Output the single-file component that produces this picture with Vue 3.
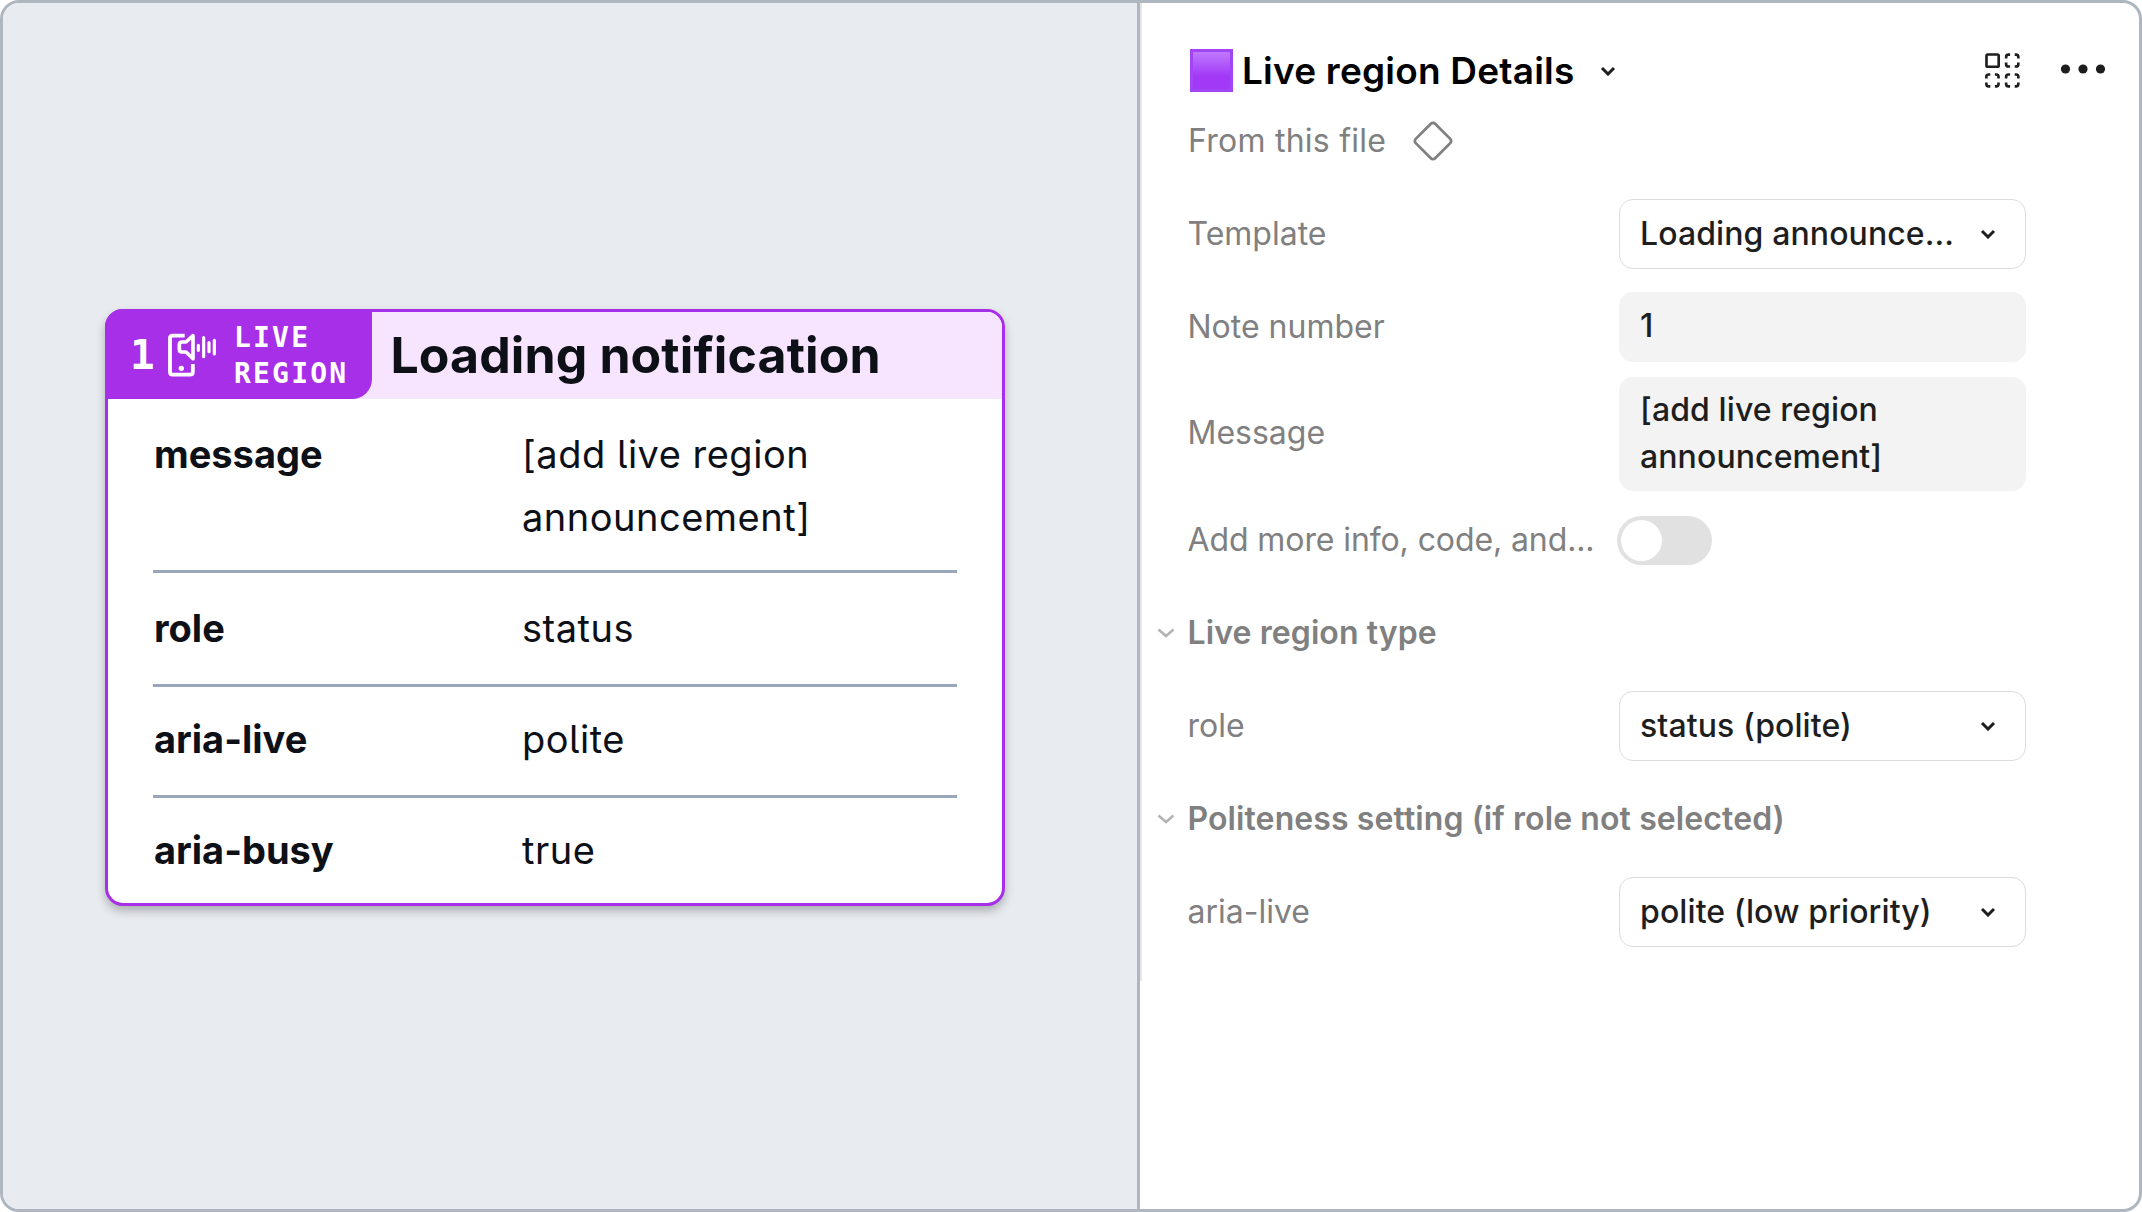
<script setup>
const attributes = [
  { name: 'message', value: '[add live region announcement]' },
  { name: 'role', value: 'status' },
  { name: 'aria-live', value: 'polite' },
  { name: 'aria-busy', value: 'true' },
]

const rows = [
  { kind: 'select', label: 'Template', value: 'Loading announce...' },
  { kind: 'input', label: 'Note number', value: '1' },
  { kind: 'textarea', label: 'Message', value: '[add live region announcement]' },
  { kind: 'toggle', label: 'Add more info, code, and...' },
  { kind: 'section', label: 'Live region type' },
  { kind: 'select', label: 'role', value: 'status (polite)' },
  { kind: 'section', label: 'Politeness setting (if role not selected)' },
  { kind: 'select', label: 'aria-live', value: 'polite (low priority)' },
]
</script>

<template>
  <div class="frame">
    <section class="canvas">
      <article class="card">
        <header class="card-head">
          <div class="badge">
            <span class="badge-num">1</span>
            <svg class="badge-icon" viewBox="234 126 147 132" fill="none" stroke="#fff" stroke-linecap="round" stroke-linejoin="round">
              <path stroke-width="11.500" stroke-linecap="butt" d="M284 134H248Q240 134 240 142V243Q240 251 248 251H300Q308.500 251 308.500 243V219" />
              <path stroke-width="11" d="M309 134 288 153H276Q268 153 268 161V175Q268 183 276 183H288L309 203Z" />
              <path stroke-width="9.500" d="M325 163V178M341 140V197M357 155V182M373 148V189" />
              <circle cx="274" cy="232" r="8" fill="#fff" stroke="none" />
            </svg>
            <span class="badge-text">LIVE<br />REGION</span>
          </div>
          <h1 class="card-title">Loading notification</h1>
        </header>
        <dl class="attrs">
          <div v-for="a in attributes" :key="a.name" class="attr" :class="'attr-' + a.name">
            <dt>{{ a.name }}</dt>
            <dd>{{ a.value }}</dd>
          </div>
        </dl>
      </article>
    </section>

    <section class="panel">
      <div class="edge"></div>
      <header class="panel-head">
        <span class="swatch"></span>
        <h2>Live region Details</h2>
        <svg class="chev head-chev" viewBox="0 0 16 10"><path d="M2 2 8 8 14 2" /></svg>
        <svg class="grid-icon" viewBox="135 98 106 106" fill="none" stroke="#1e1e1e" stroke-width="8">
          <rect x="139.500" y="102.500" width="37" height="37" rx="4" />
          <path d="M199 115V110Q199 103 206 103H211M225 103H229Q236 103 236 110V115M236 127V132Q236 139 229 139H225M211 139H206Q199 139 199 132V127" />
          <path d="M139 175V170Q139 163 146 163H151M165 163H169Q176 163 176 170V175M176 187V192Q176 199 169 199H165M151 199H146Q139 199 139 192V187" />
          <path d="M199 175V170Q199 163 206 163H211M225 163H229Q236 163 236 170V175M236 187V192Q236 199 229 199H225M211 199H206Q199 199 199 192V187" />
        </svg>
        <svg class="more" viewBox="0 0 46 12" fill="#1e1e1e">
          <circle cx="5.500" cy="6" r="4.600" /><circle cx="23" cy="6" r="4.600" /><circle cx="40.500" cy="6" r="4.600" />
        </svg>
      </header>
      <div class="source">
        <span>From this file</span>
        <svg class="diamond" viewBox="0 0 42 42"><rect x="7.300" y="7.300" width="27.400" height="27.400" rx="3" transform="rotate(45 21 21)" /></svg>
      </div>
      <div class="rows">
        <div v-for="r in rows" :key="r.label" class="row" :class="r.kind">
          <svg v-if="r.kind === 'section'" class="section-chev" viewBox="0 0 18 10"><path d="M1.500 1.500 9 8 16.500 1.500" /></svg>
          <span class="label">{{ r.label }}</span>
          <div v-if="r.kind === 'select'" class="field bordered">
            <span>{{ r.value }}</span>
            <svg class="chev" viewBox="0 0 16 10"><path d="M2 2 8 8 14 2" /></svg>
          </div>
          <div v-else-if="r.kind === 'input' || r.kind === 'textarea'" class="field filled">
            <span>{{ r.value }}</span>
          </div>
          <div v-else-if="r.kind === 'toggle'" class="switch"><span class="knob"></span></div>
        </div>
      </div>
    </section>
  </div>
</template>

<style>
body {
  background: #fff;
}
</style>

<style scoped>
* {
  box-sizing: border-box;
  margin: 0;
}
.frame {
  display: flex;
  width: 2142px;
  height: 1212px;
  border: 3px solid #aeb7c0;
  border-radius: 19px;
  overflow: hidden;
  background: #fff;
  font-family: Inter, "Liberation Sans", sans-serif;
}
.canvas {
  flex: none;
  width: 1137px;
  padding: 306px 0 0 102px;
  border-right: 3px solid #aeb7c0;
  background: #e8ebf0;
}
.card {
  width: 900px;
  height: 597px;
  border: 3px solid #a72fe8;
  border-radius: 18px;
  background: #fff;
  color: #0d1017;
  box-shadow: 0 5px 10px rgba(0, 0, 0, 0.26);
}
.card-head {
  display: flex;
  height: 87px;
  border-radius: 15px 15px 0 0;
  background: #f7e4fe;
}
.badge {
  display: flex;
  align-items: center;
  flex: none;
  width: 267px;
  margin: -3px 0 0 -3px;
  padding: 2px 0 0 25px;
  border-radius: 18px 0 20px 0;
  background: #a72fe8;
  color: #fff;
  font-family: "DejaVu Sans Mono", monospace;
  font-weight: 700;
}
.badge-num {
  width: 38px;
  font-size: 41px;
  line-height: 48px;
}
.badge-icon {
  flex: none;
  width: 49px;
  height: 44px;
}
.badge-text {
  margin-left: 17px;
  padding-top: 2px;
  font-size: 28px;
  line-height: 36px;
  letter-spacing: 2.2px;
}
.card-title {
  margin-left: 18.5px;
  font-size: 50px;
  font-weight: 700;
  letter-spacing: 0.1px;
  line-height: 87px;
  white-space: nowrap;
}
.attrs {
  padding: 0 45px;
}
.attr {
  display: flex;
  height: 111px;
  padding-top: 21px;
  border-bottom: 3px solid #9aa7ba;
  font-size: 38px;
  line-height: 62.5px;
}
.attr-message {
  height: 174px;
  padding-top: 24px;
}
.attr-role {
  height: 114px;
  padding-top: 24px;
}
.attr:last-child {
  border-bottom: 0;
}
.attr dt {
  flex: none;
  width: 369px;
  padding-left: 1px;
  font-weight: 700;
}
.attr dd {
  width: 330px;
  letter-spacing: 0.5px;
  font-feature-settings: "cv05";
}
.panel {
  position: relative;
  flex: 1;
  padding-top: 30px;
}
.edge {
  position: absolute;
  left: 0;
  top: 0;
  width: 2px;
  height: 978px;
  background: #e6e6e6;
}
.panel-head {
  display: flex;
  align-items: center;
  height: 75px;
  padding-left: 50px;
}
.swatch {
  width: 43px;
  height: 43px;
  border: 3px solid #a245f5;
  background: linear-gradient(#bf79fb, #a239f7 65%);
}
.panel-head h2 {
  width: 358px;
  margin-left: 9px;
  font-size: 37px;
  font-weight: 600;
  letter-spacing: 0.2px;
  line-height: 48px;
  color: #000;
  white-space: nowrap;
}
.chev {
  flex: none;
  width: 16px;
  height: 10px;
  fill: none;
  stroke: #1e1e1e;
  stroke-width: 3;
}
.head-chev {
  margin-right: 369px;
}
.grid-icon {
  flex: none;
  width: 35px;
  height: 35px;
}
.more {
  flex: none;
  width: 46px;
  height: 12px;
  margin: -3px 0 0 40px;
}
.source {
  display: flex;
  align-items: center;
  height: 65px;
  padding-left: 48px;
  font-size: 32px;
  letter-spacing: 0.25px;
  color: #808080;
}
.source span {
  width: 224px;
}
.diamond {
  width: 42px;
  height: 42px;
  fill: none;
  stroke: #808080;
  stroke-width: 2.8;
}
.rows {
  padding: 14.6px 0 0 47.5px;
}
.row {
  position: relative;
  display: flex;
  align-items: center;
  height: 92.8px;
  font-size: 32px;
  line-height: 46.5px;
}
.textarea {
  height: 121px;
}
.label {
  flex: none;
  width: 431.5px;
  color: #808080;
  white-space: nowrap;
}
.toggle .label {
  width: 429.5px;
  letter-spacing: -0.1px;
}
.section .label {
  font-weight: 600;
  letter-spacing: 0.1px;
}
.section-chev {
  position: absolute;
  left: -31px;
  width: 18px;
  height: 10px;
  fill: none;
  stroke: #b3b3b3;
  stroke-width: 2.6;
}
.field {
  display: flex;
  align-items: center;
  justify-content: space-between;
  width: 407px;
  height: 70px;
  padding: 0 29px 0 21px;
  border-radius: 14px;
  color: #1e1e1e;
  font-weight: 450;
  letter-spacing: 0.1px;
}
.bordered {
  padding-left: 20px;
  border: 1.5px solid #dcdcdc;
}
.filled {
  background: #f3f3f3;
}
.filled span {
  padding-bottom: 2px;
}
.textarea .field {
  height: 114px;
  padding-right: 100px;
}
.textarea .field span {
  padding-bottom: 0;
}
.switch {
  width: 95px;
  height: 49px;
  padding: 4px;
  border-radius: 25px;
  background: #e1e1e1;
}
.knob {
  display: block;
  width: 41px;
  height: 41px;
  border-radius: 50%;
  background: #fff;
}
</style>
